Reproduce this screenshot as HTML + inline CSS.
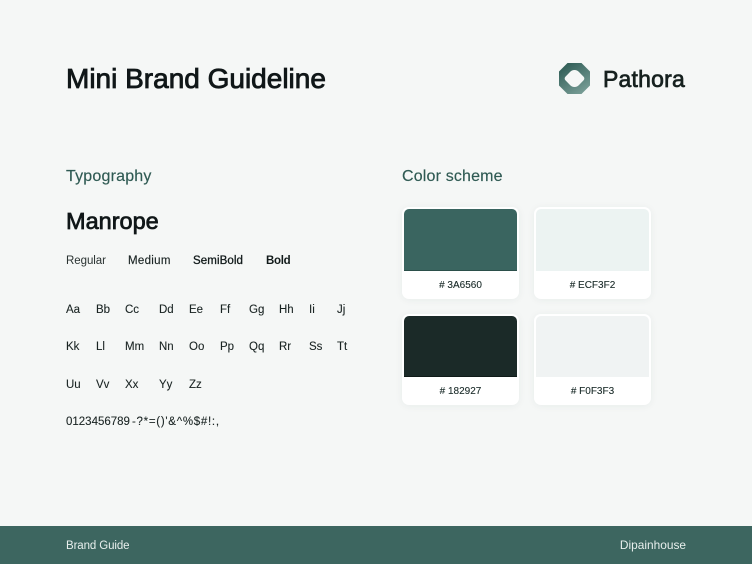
<!DOCTYPE html>
<html>
<head>
<meta charset="utf-8">
<style>
html,body{margin:0;padding:0}
body{width:752px;height:564px;position:relative;overflow:hidden;background:#f5f7f6;font-family:"Liberation Sans",sans-serif;color:#111a1a}
.t{position:absolute;white-space:nowrap;line-height:1}
.g{font-size:11.5px;color:#1a2423;top:0;-webkit-text-stroke:.1px #1a2423}
.card{position:absolute;background:#fff;border-radius:7px;box-shadow:0 1px 8px rgba(40,60,60,.06)}
.sw{position:absolute;left:2px;top:2px;width:113px;border-radius:5px 5px 0 0}
.hex{position:absolute;left:0;right:0;text-align:center;font-size:10px;color:#182927;line-height:1;white-space:nowrap;-webkit-text-stroke:.1px #182927}
</style>
</head>
<body>
<div class="t" style="left:66px;top:65px;font-size:28px;color:#101718;-webkit-text-stroke:.85px #101718">Mini Brand Guideline</div>

<svg style="position:absolute;left:558px;top:62px" width="33" height="33" viewBox="0 0 33 33">
<defs><linearGradient id="lg" x1="0.2" y1="0.1" x2="0.8" y2="1"><stop offset="0" stop-color="#34615a"/><stop offset="1" stop-color="#7a9f98"/></linearGradient></defs>
<path fill="url(#lg)" fill-rule="evenodd" d="M9.5 1H23.5L32 9.5V23.5L23.5 32H9.5L1 23.5V9.5ZM16.5 8C14.6 8 13.3 8.8 12 10L7.5 14.6C6.4 15.7 6.4 17.3 7.5 18.4L12 23C13.3 24.2 14.6 25 16.5 25C18.4 25 19.7 24.2 21 23L25.5 18.4C26.6 17.3 26.6 15.7 25.5 14.6L21 10C19.7 8.8 18.4 8 16.5 8Z"/>
</svg>
<div class="t" style="left:603px;top:68px;font-size:23px;letter-spacing:.2px;color:#16211f;-webkit-text-stroke:.7px #16211f">Pathora</div>

<div class="t" style="left:66px;top:169px;font-size:16px;color:#2f5a53;letter-spacing:.2px;-webkit-text-stroke:.15px #2f5a53">Typography</div>
<div class="t" style="left:402px;top:169px;font-size:16px;color:#2f5a53;letter-spacing:.17px;-webkit-text-stroke:.15px #2f5a53">Color scheme</div>

<div class="t" style="left:66px;top:210px;font-size:23.5px;color:#101718;-webkit-text-stroke:.75px #101718">Manrope</div>

<div class="t" style="left:66px;top:256px;font-size:11.5px;letter-spacing:-.05px;color:#2a3332">Regular</div>
<div class="t" style="left:128px;top:256px;font-size:11.5px;letter-spacing:.3px;color:#1a2423;-webkit-text-stroke:.15px #1a2423">Medium</div>
<div class="t" style="left:193px;top:256px;font-size:11.5px;letter-spacing:.1px;color:#111a1a;-webkit-text-stroke:.3px #111a1a">SemiBold</div>
<div class="t" style="left:266px;top:256px;font-size:11.5px;letter-spacing:-.3px;font-weight:700;color:#111a1a">Bold</div>

<div style="position:absolute;left:0;top:305px;width:400px;height:12px">
<span class="t g" style="left:66px">Aa</span><span class="t g" style="left:96px">Bb</span><span class="t g" style="left:125px">Cc</span><span class="t g" style="left:159px">Dd</span><span class="t g" style="left:189px">Ee</span><span class="t g" style="left:220px">Ff</span><span class="t g" style="left:249px">Gg</span><span class="t g" style="left:279px">Hh</span><span class="t g" style="left:309px">Ii</span><span class="t g" style="left:337px">Jj</span>
</div>
<div style="position:absolute;left:0;top:342px;width:400px;height:12px">
<span class="t g" style="left:66px">Kk</span><span class="t g" style="left:96px">Ll</span><span class="t g" style="left:125px">Mm</span><span class="t g" style="left:159px">Nn</span><span class="t g" style="left:189px">Oo</span><span class="t g" style="left:220px">Pp</span><span class="t g" style="left:249px">Qq</span><span class="t g" style="left:279px">Rr</span><span class="t g" style="left:309px">Ss</span><span class="t g" style="left:337px">Tt</span>
</div>
<div style="position:absolute;left:0;top:380px;width:400px;height:12px">
<span class="t g" style="left:66px">Uu</span><span class="t g" style="left:96px">Vv</span><span class="t g" style="left:125px">Xx</span><span class="t g" style="left:159px">Yy</span><span class="t g" style="left:189px">Zz</span>
</div>
<div class="t g" style="left:66px;top:417px">0123456789</div>
<div class="t g" style="left:132px;top:417px;letter-spacing:.72px">-?*=()'&amp;^%$#!:,</div>

<div class="card" style="left:402px;top:207px;width:117px;height:92px">
  <div class="sw" style="height:62px;background:#3a6560;border-bottom:1px solid #2b4f4a;box-sizing:border-box"></div>
  <div class="hex" style="top:74px"># 3A6560</div>
</div>
<div class="card" style="left:534px;top:207px;width:117px;height:92px">
  <div class="sw" style="height:62px;background:#ecf3f2"></div>
  <div class="hex" style="top:74px"># ECF3F2</div>
</div>
<div class="card" style="left:402px;top:314px;width:117px;height:91px">
  <div class="sw" style="height:61px;background:#1b2a28;border-bottom:1px solid #0f1a18;box-sizing:border-box"></div>
  <div class="hex" style="top:73px"># 182927</div>
</div>
<div class="card" style="left:534px;top:314px;width:117px;height:91px">
  <div class="sw" style="height:61px;background:#f0f3f3"></div>
  <div class="hex" style="top:73px"># F0F3F3</div>
</div>

<div style="position:absolute;left:0;top:526px;width:752px;height:38px;background:#3d6660"></div>
<div class="t" style="left:66px;top:541px;font-size:11.5px;letter-spacing:-.1px;color:#e8efed">Brand Guide</div>
<div class="t" style="right:66px;top:540px;font-size:11.9px;color:#e8efed">Dipainhouse</div>
</body>
</html>
